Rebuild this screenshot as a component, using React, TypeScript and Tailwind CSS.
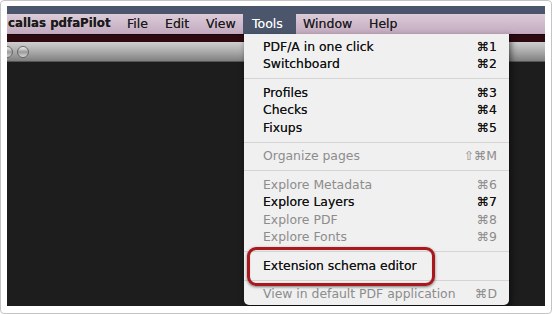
import React from "react";

type Row =
  | { kind: "item"; label: string; sc?: string; on: boolean }
  | { kind: "sep" };

const rows: Row[] = [
  { kind: "item", label: "PDF/A in one click", sc: "⌘1", on: true },
  { kind: "item", label: "Switchboard", sc: "⌘2", on: true },
  { kind: "sep" },
  { kind: "item", label: "Profiles", sc: "⌘3", on: true },
  { kind: "item", label: "Checks", sc: "⌘4", on: true },
  { kind: "item", label: "Fixups", sc: "⌘5", on: true },
  { kind: "sep" },
  { kind: "item", label: "Organize pages", sc: "⇧⌘M", on: false },
  { kind: "sep" },
  { kind: "item", label: "Explore Metadata", sc: "⌘6", on: false },
  { kind: "item", label: "Explore Layers", sc: "⌘7", on: true },
  { kind: "item", label: "Explore PDF", sc: "⌘8", on: false },
  { kind: "item", label: "Explore Fonts", sc: "⌘9", on: false },
  { kind: "sep" },
  { kind: "item", label: "Extension schema editor", on: true },
  { kind: "sep" },
  { kind: "item", label: "View in default PDF application", sc: "⌘D", on: false },
];

const font = { fontFamily: '"DejaVu Sans", "Liberation Sans", sans-serif' };

export default function App() {
  return (
    <div
      className="w-[552px] h-[314px] bg-white rounded-[4px] border border-[#c4c4c4] pl-[6px] pt-[5px] overflow-hidden"
      style={font}
    >
      <div className="relative w-[538px] h-[300px] overflow-hidden bg-[#1d1d1d] flex flex-col">
        {/* top strip */}
        <div className="h-[8px] bg-[#4b566d]" />
        {/* menu bar */}
        <div className="h-[20px] flex items-stretch bg-gradient-to-b from-[#dccbd9] to-[#c2aabe] text-[12.5px] text-[#1a1a1a] leading-none [text-shadow:0_0_0.5px_rgba(0,0,0,0.6)]">
          <div className="w-[113px] pl-[1px] flex items-center font-bold text-[11.8px]">callas pdfaPilot</div>
          <div className="w-[38px] pl-[7px] flex items-center">File</div>
          <div className="w-[41px] pl-[7px] flex items-center">Edit</div>
          <div className="w-[44px] pl-[7px] flex items-center">View</div>
          <div className="w-[53px] pl-[9px] flex items-center bg-[#4b566d] text-white [text-shadow:0_0_0.5px_rgba(255,255,255,0.6)]">Tools</div>
          <div className="w-[66px] pl-[7px] flex items-center">Window</div>
          <div className="pl-[7px] flex items-center">Help</div>
        </div>
        {/* maroon strip */}
        <div className="h-[8px] bg-[#2c0a10] border-t border-[#1a0508]" />
        {/* title bar */}
        <div className="h-[20px] bg-gradient-to-b from-[#cfcfcf] via-[#ababab] to-[#808080] flex items-center border-b border-[#555]">
          <div className="w-[12px] h-[12px] rounded-full -ml-[6px] bg-gradient-to-b from-[#f4f4f4] via-[#9a9a9a] to-[#d8d8d8] border border-[#666]" />
          <div className="w-[12px] h-[12px] rounded-full ml-[4px] bg-gradient-to-b from-[#f4f4f4] via-[#9a9a9a] to-[#d8d8d8] border border-[#666]" />
        </div>
        <div className="flex-1 bg-[#1d1d1d]" />

        {/* dropdown menu */}
        <div className="absolute left-[237px] top-[28px] w-[265px] h-[271px] bg-[#f0f0f0] rounded-b-[5px] shadow-[2px_3px_6px_rgba(0,0,0,0.55)] pt-[4px] text-[12.4px] leading-none">
          {rows.map((r, i) =>
            r.kind === "sep" ? (
              <div key={i} className="h-[11px] flex items-center">
                <div className="w-full h-px bg-[#d4d4d4]" />
              </div>
            ) : (
              <div
                key={i}
                className={
                  "h-[17.5px] flex items-center justify-between pl-[19px] pr-[12px] " +
                  (r.on
                    ? "text-[#111] [text-shadow:0_0_0.5px_rgba(0,0,0,0.7)]"
                    : "text-[#8c8c8c]")
                }
              >
                <span>{r.label}</span>
                {r.sc ? <span>{r.sc}</span> : null}
              </div>
            )
          )}
          <div className="absolute left-[3px] top-[213px] w-[188px] h-[39px] rounded-[9px] border-[3px] border-[#a8181d] shadow-[0_1px_3px_rgba(0,0,0,0.5),inset_0_0_1px_rgba(0,0,0,0.4)]" />
        </div>
      </div>
    </div>
  );
}
